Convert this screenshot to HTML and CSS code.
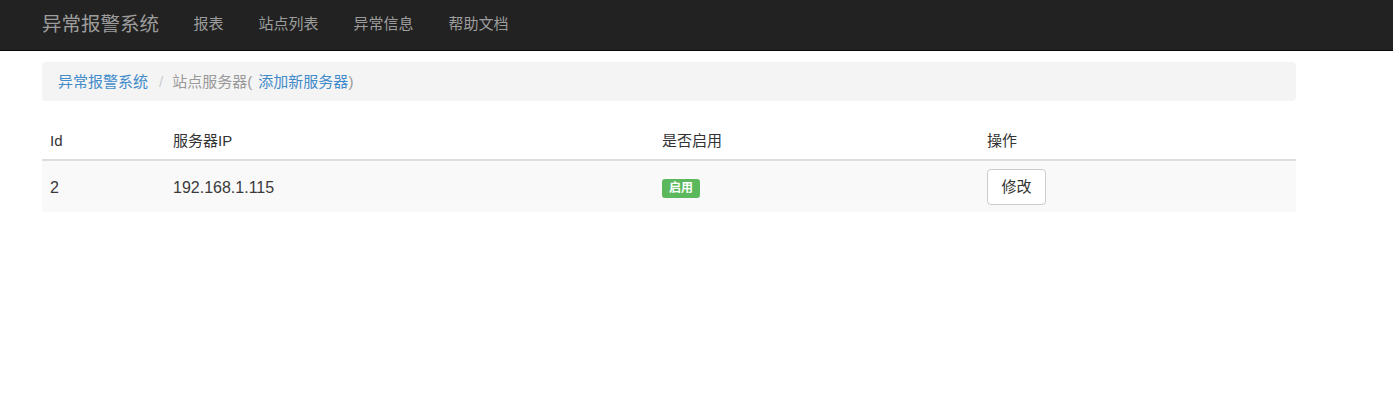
FILE: index.html
```html
<!DOCTYPE html>
<html lang="zh-CN">
<head>
<meta charset="utf-8">
<title>异常报警系统</title>
<link rel="stylesheet" href="styles.css">
</head>
<body>
<nav class="navbar">
  <div class="container nav-inner">
    <a class="brand" href="#">异常报警系统</a>
    <ul class="nav-links">
      <li><a href="#">报表</a></li>
      <li><a href="#">站点列表</a></li>
      <li><a href="#">异常信息</a></li>
      <li><a href="#">帮助文档</a></li>
    </ul>
  </div>
</nav>
<main class="container">
  <ol class="breadcrumb">
    <li><a href="#">异常报警系统</a></li>
    <li class="sep">/</li>
    <li class="active">站点服务器( <a class="add-link" href="#">添加新服务器</a>)</li>
  </ol>
  <table class="table">
    <thead>
      <tr>
        <th class="c-id">Id</th>
        <th class="c-ip">服务器IP</th>
        <th class="c-en">是否启用</th>
        <th class="c-op">操作</th>
      </tr>
    </thead>
    <tbody>
      <tr>
        <td class="num">2</td>
        <td class="num">192.168.1.115</td>
        <td><span class="label">启用</span></td>
        <td><button class="btn" type="button">修改</button></td>
      </tr>
    </tbody>
  </table>
</main>
</body>
</html>
```

FILE: styles.css
```css
* { box-sizing: border-box; }

html, body {
  margin: 0;
  padding: 0;
  background: #fff;
  color: #333;
  font-family: "Liberation Sans", Arial, "Noto Sans CJK SC", sans-serif;
  font-size: 15px;
  line-height: 20px;
}

a { text-decoration: none; color: #428bca; }

.container {
  margin-left: 42px;
  width: 1254px;
}

.navbar {
  background: #222;
  border-bottom: 1px solid #080808;
  height: 51px;
}

.nav-inner {
  display: flex;
  align-items: center;
  height: 50px;
}

.brand {
  color: #9d9d9d;
  font-size: 19.5px;
  line-height: 20px;
  margin-top: -2px;
}

.nav-links {
  list-style: none;
  display: flex;
  margin: 0 0 0 17px;
  padding: 0;
}

.nav-links a {
  display: block;
  color: #9d9d9d;
  padding: 0 17.5px;
  font-size: 15px;
  line-height: 20px;
  margin-top: -2px;
}

.breadcrumb {
  list-style: none;
  margin: 11px 0 20px;
  padding: 0 16px;
  height: 39px;
  display: flex;
  align-items: center;
  background: #f4f4f4;
  border-radius: 4px;
  font-size: 15px;
}

.breadcrumb .sep {
  color: #ccc;
  padding: 0 9px 0 11px;
}

.breadcrumb .active { color: #999; }

.add-link { margin-left: 2px; }

.table {
  width: 1254px;
  border-collapse: collapse;
  border-spacing: 0;
  table-layout: fixed;
}

.table th {
  text-align: left;
  font-weight: normal;
  padding: 10px 8px 8px;
  line-height: 20px;
  border-bottom: 2px solid #ddd;
  font-size: 15px;
}

.c-id { width: 123px; }
.c-ip { width: 489px; }
.c-en { width: 325px; }
.c-op { width: 317px; }

.table td {
  padding: 8px 8px 7px;
  vertical-align: middle;
  background: #f9f9f9;
  line-height: 20px;
}

.table td.num { font-size: 16px; padding-top: 10px; color: #3a3a3a; }

.label {
  display: inline-block;
  background: #5cb85c;
  color: #fff;
  font-weight: bold;
  font-size: 12px;
  line-height: 12px;
  padding: 3px 7px 4px;
  border-radius: 3px;
  margin-top: 3px;
  vertical-align: middle;
}

.btn {
  display: block;
  width: 59px;
  height: 36px;
  padding: 0;
  background: #fff;
  border: 1px solid #ccc;
  border-radius: 4px;
  color: #333;
  font-family: "Liberation Sans", Arial, "Noto Sans CJK SC", sans-serif;
  font-size: 15px;
  line-height: 20px;
}
```
